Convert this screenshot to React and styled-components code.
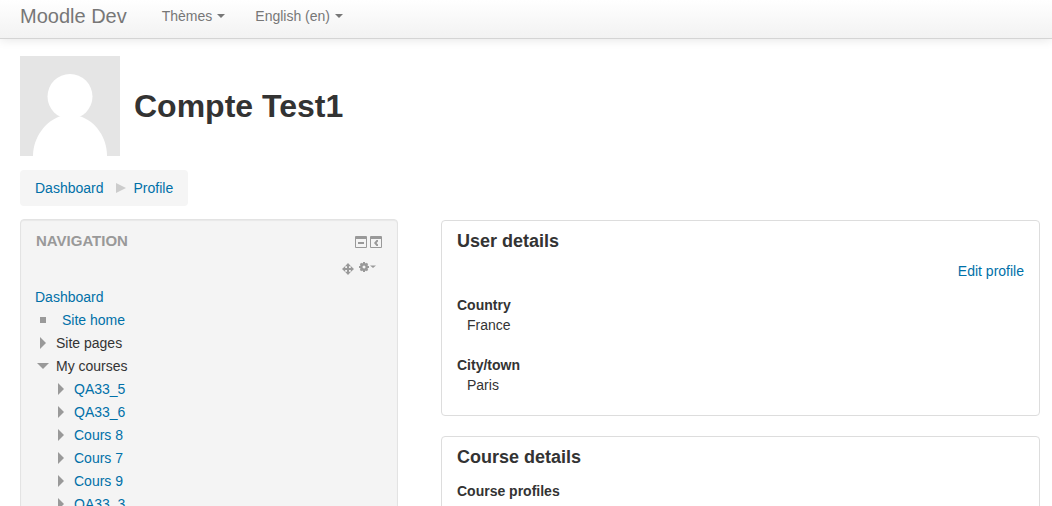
import React from "react";
import styled, { createGlobalStyle } from "styled-components";

const GlobalStyle = createGlobalStyle`
  * { box-sizing: border-box; }
  body {
    margin: 0;
    background: #fff;
    color: #333;
    font: 14px/20px "Liberation Sans", Arial, sans-serif;
  }
  h1, h2, h3, p, ul, ol, dl, dd { margin: 0; padding: 0; }
  ul, ol { list-style: none; }
  button { border: 0; padding: 0; background: none; font: inherit; color: inherit; cursor: pointer; }
  svg { display: block; flex: none; }
`;

const Link = styled.a`
  color: #0070a8;
  text-decoration: none;
  &:hover { text-decoration: underline; }
`;

const Navbar = styled.header`
  display: flex;
  align-items: center;
  gap: 35px;
  padding: 6px 20px 12px;
  border-bottom: 1px solid #d4d4d4;
  background: linear-gradient(#fff, #f2f2f2);
  box-shadow: 0 1px 10px rgba(0, 0, 0, 0.1);
`;

const Brand = styled.a`
  color: #777;
  font-size: 20px;
  text-decoration: none;
`;

const Menu = styled.nav`
  display: flex;
  gap: 30px;
`;

const MenuButton = styled.button`
  display: flex;
  align-items: center;
  gap: 5px;
  color: #777;
`;

const Page = styled.div`
  padding: 17px 12px 20px 20px;
`;

const UserHeader = styled.div`
  display: flex;
  align-items: center;
  gap: 14px;
`;

const UserName = styled.h1`
  font-size: 32px;
  line-height: 40px;
`;

const Breadcrumb = styled.ol`
  display: inline-flex;
  align-items: center;
  margin: 14px 0 13px;
  padding: 8px 15px;
  border-radius: 4px;
  background: #f5f5f5;
  vertical-align: top;
`;

const Crumb = styled.li`
  display: flex;
  align-items: center;
  & + &::before {
    content: "";
    margin: 0 8px 0 12px;
    border: 5px solid transparent;
    border-left: 10px solid #ccc;
    border-right: 0;
  }
`;

const Columns = styled.div`
  display: grid;
  grid-template-columns: minmax(0, 378fr) minmax(0, 599fr);
  gap: 43px;
  align-items: start;
`;

const Block = styled.aside`
  padding: 11px 15px 11px 14px;
  border: 1px solid #e3e3e3;
  border-radius: 4px;
  background: #f4f4f4;
  box-shadow: inset 0 1px 1px rgba(0, 0, 0, 0.05);
`;

const BlockHeader = styled.div`
  display: flex;
  align-items: center;
  justify-content: space-between;
  padding-left: 1px;
`;

const BlockTitle = styled.h2`
  color: #999;
  font-size: 15px;
  line-height: 20px;
  text-transform: uppercase;
`;

const Tools = styled.div`
  display: flex;
  align-items: center;
  justify-content: flex-end;
  gap: 2px;
  padding-top: 2px;
`;

const EditTools = styled(Tools)`
  gap: 5px;
  padding: 11px 6px 9px 0;
`;

const Tree = styled.ul`
  padding-left: ${(p) => (p.$nested ? "18px" : "0")};
`;

const TreeRow = styled.div`
  display: flex;
  align-items: center;
  height: 23px;
`;

const Marker = styled.span`
  display: flex;
  justify-content: center;
  width: 16px;
  margin-right: 11px;
`;

const TreeToggle = styled.button`
  display: flex;
  justify-content: center;
  width: 16px;
  margin-right: 5px;
`;

const Sections = styled.main`
  display: grid;
  gap: 20px;
  padding-top: 1px;
`;

const Card = styled.section`
  padding: 10px 15px 20px;
  border: 1px solid #ddd;
  border-radius: 4px;
`;

const CardTitle = styled.h3`
  margin-bottom: ${(p) => (p.$spaced ? "14px" : "10px")};
  font-size: 18px;
  line-height: 20px;
`;

const CardAction = styled.p`
  margin-bottom: 14px;
  text-align: right;
`;

const Details = styled.dl`
  display: grid;
  gap: 20px;
  dt { font-weight: bold; }
  dd { margin-left: 10px; }
`;

const Caret = () => (
  <svg width="8" height="4" aria-hidden="true"><path d="M0 0h8L4 4z" fill="#777" /></svg>
);

const Avatar = () => (
  <svg width="100" height="100" role="img" aria-label="Profile picture">
    <path fill="#e5e5e5" d="M0 0h100v100H0z" />
    <circle cx="50" cy="40.500" r="22.500" fill="#fff" />
    <path fill="#fff" d="M13 100C13 82 25 65 41 60H59C76 65 87 82 87 100z" />
  </svg>
);

const Arrow = ({ open }) =>
  open ? (
    <svg width="12" height="6" aria-hidden="true"><path d="M0 0h12L6 6z" fill="#999" /></svg>
  ) : (
    <svg width="6" height="12" aria-hidden="true"><path d="M0 0l6 6-6 6z" fill="#999" /></svg>
  );

const windowFrame =
  "M1 0h10a1 1 0 0 1 1 1v10a1 1 0 0 1-1 1H1a1 1 0 0 1-1-1V1a1 1 0 0 1 1-1zM1 3v8h10V3z";

const HideIcon = () => (
  <svg width="13" height="12" fill="#999" aria-hidden="true">
    <path fillRule="evenodd" d={windowFrame} />
    <path d="M3 6h6v2H3z" />
  </svg>
);

const DockIcon = () => (
  <svg width="12" height="12" fill="#999" aria-hidden="true">
    <path fillRule="evenodd" d={windowFrame} />
    <path d="M6.500 4H8v1.500L6.500 7 8 8.500V10H6.500L4 7z" />
  </svg>
);

const MoveIcon = () => (
  <svg width="12" height="12" fill="#999" aria-hidden="true">
    <path d="M6 0l3 3.200H7V5h1.800V3L12 6 8.800 9V7H7v1.800h2L6 12 3 8.800h2V7H3.200v2L0 6l3.200-3v2H5V3.200H3z" />
  </svg>
);

const GearIcon = () => (
  <svg width="17" height="14" fill="#999" aria-hidden="true">
    <circle cx="5" cy="5" r="2.700" fill="none" stroke="#999" strokeWidth="2.400" />
    <path d="M4 0h2v2H4zM4 8h2v2H4zM0 4h2v2H0zM8 4h2v2H8zM.8 2.200L2.200.8l2 2-1.400 1.400zM7.800.8l1.400 1.400-2 2-1.400-1.400zM.8 7.800l2-2 1.400 1.400-2 2zM9.200 7.800L7.800 9.200l-2-2 1.400-1.400zM11 3.500h6L14 6z" />
  </svg>
);

const courses = ["QA33_5", "QA33_6", "Cours 8", "Cours 7", "Cours 9", "QA33_3"];

function CourseItem({ name }) {
  return (
    <li>
      <TreeRow>
        <TreeToggle aria-label={`Expand ${name}`} aria-expanded="false"><Arrow /></TreeToggle>
        <Link href="#course">{name}</Link>
      </TreeRow>
    </li>
  );
}

export default function App() {
  return (
    <>
      <GlobalStyle />
      <Navbar>
        <Brand href="#home">Moodle Dev</Brand>
        <Menu>
          <MenuButton>Thèmes<Caret /></MenuButton>
          <MenuButton>English (en)<Caret /></MenuButton>
        </Menu>
      </Navbar>
      <Page>
        <UserHeader>
          <Avatar />
          <UserName>Compte Test1</UserName>
        </UserHeader>
        <Breadcrumb>
          <Crumb><Link href="#dashboard">Dashboard</Link></Crumb>
          <Crumb><Link href="#profile">Profile</Link></Crumb>
        </Breadcrumb>
        <Columns>
          <Block>
            <BlockHeader>
              <BlockTitle>Navigation</BlockTitle>
              <Tools>
                <button aria-label="Hide Navigation block"><HideIcon /></button>
                <button aria-label="Dock Navigation block"><DockIcon /></button>
              </Tools>
            </BlockHeader>
            <EditTools>
              <button aria-label="Move Navigation block"><MoveIcon /></button>
              <button aria-label="Actions"><GearIcon /></button>
            </EditTools>
            <Tree>
              <li><TreeRow><Link href="#dashboard">Dashboard</Link></TreeRow></li>
              <li>
                <TreeRow>
                  <Marker><svg width="6" height="6" aria-hidden="true"><path d="M0 0h6v6H0z" fill="#999" /></svg></Marker>
                  <Link href="#home">Site home</Link>
                </TreeRow>
              </li>
              <li>
                <TreeRow>
                  <TreeToggle aria-label="Expand Site pages" aria-expanded="false"><Arrow /></TreeToggle>
                  Site pages
                </TreeRow>
              </li>
              <li>
                <TreeRow>
                  <TreeToggle aria-label="Collapse My courses" aria-expanded="true"><Arrow open /></TreeToggle>
                  My courses
                </TreeRow>
                <Tree $nested>
                  {courses.map((name) => <CourseItem key={name} name={name} />)}
                </Tree>
              </li>
            </Tree>
          </Block>
          <Sections>
            <Card>
              <CardTitle>User details</CardTitle>
              <CardAction><Link href="#edit">Edit profile</Link></CardAction>
              <Details>
                <div><dt>Country</dt><dd>France</dd></div>
                <div><dt>City/town</dt><dd>Paris</dd></div>
              </Details>
            </Card>
            <Card>
              <CardTitle $spaced>Course details</CardTitle>
              <Details>
                <div><dt>Course profiles</dt></div>
              </Details>
            </Card>
          </Sections>
        </Columns>
      </Page>
    </>
  );
}
